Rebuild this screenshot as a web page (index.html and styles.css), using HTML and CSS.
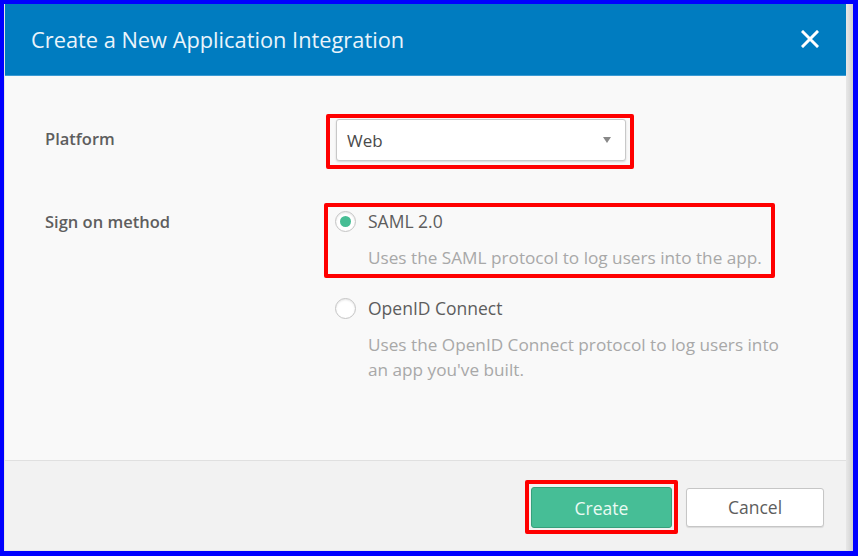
FILE: index.html
```html
<!DOCTYPE html>
<html lang="en">
<head>
    <meta charset="UTF-8">
    <title>Create a New Application Integration</title>
    <link rel="stylesheet" href="styles.css">
</head>
<body>
    <div class="frame">
        <div class="dialog">
            <div class="dialog-head">
                <h1>Create a New Application Integration</h1>
                <span class="close">
                    <svg width="18" height="18" viewBox="0 0 18 18"><path d="M2 2 L16 16 M16 2 L2 16" stroke="#fff" stroke-width="3" stroke-linecap="square"/></svg>
                </span>
            </div>
            <div class="dialog-body">
                <div class="row">
                    <label class="label label-platform">Platform</label>
                    <div class="field">
                        <div class="mark mark-select">
                            <div class="select">
                                <span>Web</span>
                                <span class="caret"></span>
                            </div>
                        </div>
                    </div>
                </div>
                <div class="row">
                    <label class="label label-sign">Sign on method</label>
                    <div class="field">
                        <div class="mark mark-radio">
                            <div class="option">
                                <span class="radio checked"></span>
                                <div>
                                    <div class="option-name">SAML 2.0</div>
                                    <div class="option-desc">Uses the SAML protocol to log users into the app.</div>
                                </div>
                            </div>
                        </div>
                        <div class="option option-plain">
                            <span class="radio"></span>
                            <div>
                                <div class="option-name">OpenID Connect</div>
                                <div class="option-desc">Uses the OpenID Connect protocol to log users into<br>an app you've built.</div>
                            </div>
                        </div>
                    </div>
                </div>
            </div>
            <div class="dialog-foot">
                <div class="mark mark-btn">
                    <button class="btn btn-primary">Create</button>
                </div>
                <button class="btn btn-default">Cancel</button>
            </div>
        </div>
        <div class="edge"></div>
    </div>
</body>
</html>
```

FILE: styles.css
```css
html, body {
    margin: 0;
    padding: 0;
}
body {
    font-family: "Open Sans", "Liberation Sans", sans-serif;
    color: #5d5d5d;
}
.frame {
    display: flex;
    box-sizing: border-box;
    width: 858px;
    height: 556px;
    padding: 4px 5px 5px 4px;
    background: #0000ff;
}
.dialog {
    flex: 1;
    display: flex;
    flex-direction: column;
    background: #f9f9f9;
    border-left: 1px solid #e6e6e6;
}
.edge {
    width: 7px;
    background: linear-gradient(to right, #e8e8e8, #d0d0d0);
}

/* header */
.dialog-head {
    display: flex;
    align-items: center;
    justify-content: space-between;
    height: 71px;
    padding: 0 27px 0 26px;
    background: #007cc0;
    border-bottom: 1px solid #3b9ad3;
}
.dialog-head h1 {
    margin: 0;
    font-size: 21.8px;
    font-weight: 400;
    color: #eaf4fb;
}
.close {
    display: flex;
    margin-top: -2px;
}

/* body */
.dialog-body {
    flex: 1;
    padding-top: 38px;
}
.row {
    display: grid;
    grid-template-columns: 321px 1fr;
    margin-bottom: 34px;
}
.label {
    padding-left: 40px;
    font-size: 16.5px;
    font-weight: 600;
    color: #5e5e5e;
}
.label-platform {
    padding-top: 13px;
}
.label-sign {
    padding-top: 7px;
}

/* red highlight boxes */
.mark {
    display: inline-block;
    border: 4px solid #ff0000;
    border-radius: 2px;
}
.mark-select {
    padding: 1px 4px 4px 6px;
}
.mark-radio {
    padding: 4px 9px 4px 7px;
    margin-left: -2px;
}
.mark-btn {
    padding: 3px 2px 2px 2px;
}

/* select */
.select {
    display: flex;
    align-items: center;
    justify-content: space-between;
    box-sizing: border-box;
    width: 290px;
    height: 42px;
    padding: 0 14px 0 10px;
    background: #fff;
    border: 1px solid #c8c8c8;
    border-radius: 3px;
    box-shadow: 0 1px 2px rgba(0, 0, 0, 0.15);
    font-size: 17px;
    color: #4a4a4a;
}
.caret {
    width: 0;
    height: 0;
    border-left: 4px solid transparent;
    border-right: 4px solid transparent;
    border-top: 6px solid #888;
}

/* radios */
.option {
    display: flex;
    gap: 12px;
}
.option-plain {
    margin-top: 20px;
    padding-left: 9px;
}
.radio {
    position: relative;
    flex: none;
    box-sizing: border-box;
    width: 21px;
    height: 21px;
    border: 1px solid #c4c4c4;
    border-radius: 50%;
    background: #fff;
    box-shadow: inset 0 1px 2px rgba(0, 0, 0, 0.1);
}
.radio.checked::after {
    content: "";
    position: absolute;
    top: 4px;
    left: 4px;
    width: 11px;
    height: 11px;
    border-radius: 50%;
    background: #46bd94;
}
.option-name {
    font-size: 17.5px;
    line-height: 21px;
    color: #5d5d5d;
}
.option-desc {
    margin-top: 13px;
    font-size: 17.2px;
    line-height: 25px;
    color: #a8a8a8;
}

/* footer */
.dialog-foot {
    display: flex;
    align-items: center;
    justify-content: flex-end;
    gap: 8px;
    height: 86px;
    padding: 3px 22px 0 0;
    background: #f2f2f2;
    border-top: 1px solid #e0e0e0;
    border-bottom: 1px solid #e8e8e8;
}
.btn {
    box-sizing: border-box;
    height: 41px;
    font-family: inherit;
    font-size: 17.5px;
    border-radius: 3px;
}
.btn-primary {
    display: block;
    width: 141px;
    color: #eafaf3;
    background: #46be96;
    border: 1px solid #36a07c;
}
.btn-default {
    width: 138px;
    height: 39px;
    color: #5d5d5d;
    background: #fff;
    border: 1px solid #c6c6c6;
    box-shadow: 0 1px 1px rgba(0, 0, 0, 0.1);
}
```
